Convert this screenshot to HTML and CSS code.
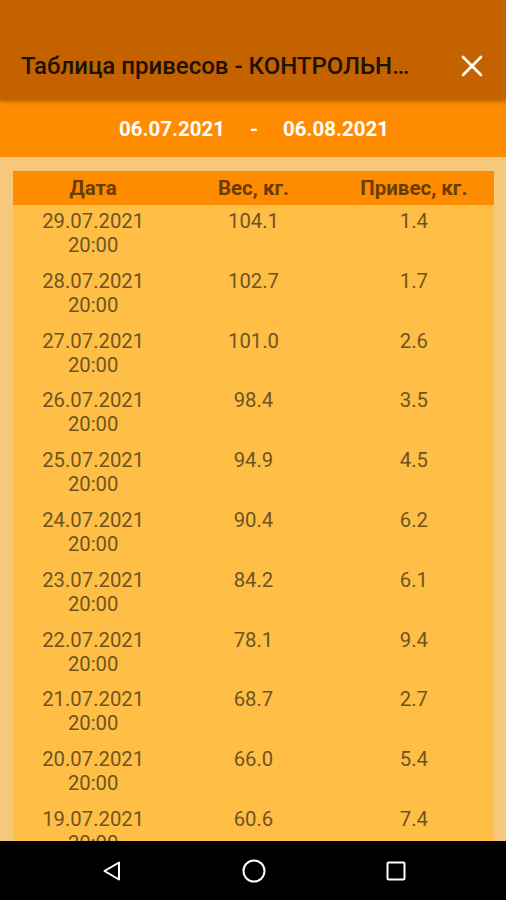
FILE: index.html
```html
<!DOCTYPE html>
<html lang="ru">

<head>
    <meta charset="UTF-8">
    <meta name="viewport" content="width=device-width, initial-scale=1.0">
    <title>Таблица привесов</title>
    <link rel="stylesheet" href="styles.css">
</head>

<body>
    <div class="screen">
        <div class="toolbar">
            <span class="title">Таблица привесов - КОНТРОЛЬНАЯ ГРУППА</span>
            <svg class="close" width="24" height="24" viewBox="0 0 24 24">
                <path d="M3 3 L21 21 M21 3 L3 21" stroke="#fff" stroke-width="2.6" stroke-linecap="round" fill="none" />
            </svg>
        </div>

        <div class="period">
            <span>06.07.2021</span>
            <span class="dash">-</span>
            <span>06.08.2021</span>
        </div>

        <div class="content">
            <div class="table">
                <div class="row head">
                    <div>Дата</div>
                    <div>Вес, кг.</div>
                    <div>Привес, кг.</div>
                </div>
                <div class="row"><div>29.07.2021<br>20:00</div><div>104.1</div><div>1.4</div></div>
                <div class="row"><div>28.07.2021<br>20:00</div><div>102.7</div><div>1.7</div></div>
                <div class="row"><div>27.07.2021<br>20:00</div><div>101.0</div><div>2.6</div></div>
                <div class="row"><div>26.07.2021<br>20:00</div><div>98.4</div><div>3.5</div></div>
                <div class="row"><div>25.07.2021<br>20:00</div><div>94.9</div><div>4.5</div></div>
                <div class="row"><div>24.07.2021<br>20:00</div><div>90.4</div><div>6.2</div></div>
                <div class="row"><div>23.07.2021<br>20:00</div><div>84.2</div><div>6.1</div></div>
                <div class="row"><div>22.07.2021<br>20:00</div><div>78.1</div><div>9.4</div></div>
                <div class="row"><div>21.07.2021<br>20:00</div><div>68.7</div><div>2.7</div></div>
                <div class="row"><div>20.07.2021<br>20:00</div><div>66.0</div><div>5.4</div></div>
                <div class="row"><div>19.07.2021<br>20:00</div><div>60.6</div><div>7.4</div></div>
            </div>
        </div>

        <div class="navbar">
            <svg width="24" height="24" viewBox="0 0 24 24">
                <path d="M19 3.5 L19 20.5 L4.5 12 Z" stroke="#fff" stroke-width="2" stroke-linejoin="round" fill="none" />
            </svg>
            <svg width="24" height="24" viewBox="0 0 24 24">
                <circle cx="12" cy="12" r="10.5" stroke="#fff" stroke-width="2" fill="none" />
            </svg>
            <svg width="24" height="24" viewBox="0 0 24 24">
                <rect x="3.5" y="3.5" width="17" height="17" rx="1" stroke="#fff" stroke-width="2" fill="none" />
            </svg>
        </div>
    </div>
</body>

</html>
```

FILE: styles.css
```css
* {
    box-sizing: border-box;
}

body {
    margin: 0;
    padding: 0;
    font-family: Roboto, "Noto Sans", sans-serif;
    background-color: #000;
}

.screen {
    width: 506px;
    height: 900px;
    display: flex;
    flex-direction: column;
    overflow: hidden;
}

.toolbar {
    height: 100px;
    flex-shrink: 0;
    background-color: #c46200;
    display: flex;
    align-items: center;
    padding: 32px 22px 0 21px;
    gap: 42px;
    box-shadow: 0 2px 4px rgba(0, 0, 0, 0.25);
    position: relative;
    z-index: 2;
}

.title {
    flex: 1;
    font-size: 24px;
    font-weight: 500;
    color: #1c1206;
    white-space: nowrap;
    overflow: hidden;
    text-overflow: ellipsis;
    line-height: 30px;
}

.close {
    flex-shrink: 0;
}

.period {
    height: 57px;
    flex-shrink: 0;
    background-color: #ff8c00;
    display: flex;
    align-items: center;
    justify-content: center;
    gap: 25px;
    color: #fff;
    font-size: 20.5px;
    font-weight: 700;
    padding-left: 2px;
}

.period .dash {
    width: 8px;
    text-align: center;
}

.content {
    flex: 1;
    min-height: 0;
    overflow: hidden;
    background-color: #f6c87c;
    padding: 14px 12px 0 13px;
}

.table {
    background-color: #ffbf47;
    min-height: 100%;
}

.row {
    display: grid;
    grid-template-columns: 1fr 1fr 1fr;
    text-align: center;
    font-size: 20.3px;
    line-height: 24px;
    color: #6e5420;
    padding: 4px 0 7.8px;
}

.row.head {
    background-color: #ff8c00;
    color: #6b3c00;
    font-weight: 700;
    font-size: 20.5px;
    line-height: 34px;
    padding: 0;
}

.navbar {
    height: 59px;
    flex-shrink: 0;
    background-color: #000;
    display: flex;
    align-items: center;
    justify-content: space-between;
    padding: 0 98px 0 100px;
}
```
